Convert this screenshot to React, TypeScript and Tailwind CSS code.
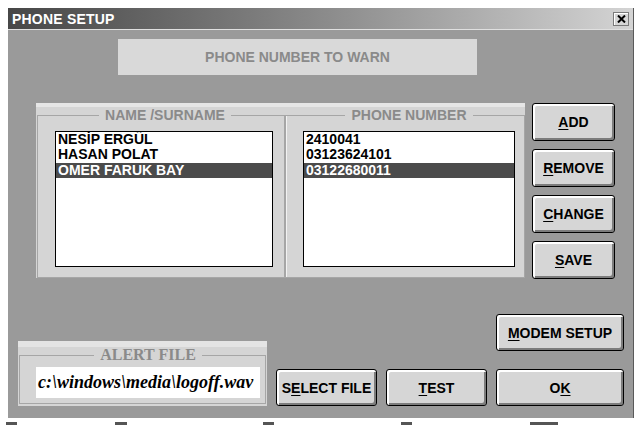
import React from "react";

const sans = { fontFamily: '"Liberation Sans", Arial, sans-serif' };
const serif = { fontFamily: '"Liberation Serif", "Times New Roman", serif' };

function Btn({ className, children }: { className: string; children: React.ReactNode }) {
  return (
    <div
      className={`flex items-center justify-center h-[37px] border border-black rounded-[3px] bg-[#d6d6d6] shadow-[inset_2px_2px_0_#ffffff,inset_-2px_-2px_0_#7c7c7c] text-[14px] font-bold text-black leading-none ${className}`}
    >
      {children}
    </div>
  );
}

function U({ children }: { children: React.ReactNode }) {
  return <span className="underline underline-offset-[2px] decoration-[1px]">{children}</span>;
}

function ListBox({ className, items, selected }: { className: string; items: string[]; selected: number }) {
  return (
    <div className={`bg-white border border-black h-[136px] ${className}`}>
      {items.map((t, i) => (
        <div
          key={t}
          className={`h-[15px] leading-[15px] text-[14px] font-bold pl-[2px] whitespace-nowrap ${
            i === selected ? "mt-[1px] bg-[#4b4b4b] text-white" : "text-black"
          }`}
        >
          {t}
        </div>
      ))}
    </div>
  );
}

export default function App() {
  return (
    <div className="w-[638px] h-[431px] bg-white overflow-hidden" style={sans}>
      <div className="pt-[8px] pl-[8px]">
        <div className="w-[626px] flex flex-col border-r border-[#5a5a5a]">
          {/* title bar */}
          <div className="h-[22px] flex items-center justify-between pl-[4px] pr-[4px] bg-gradient-to-r from-[#474747] via-[#8a8a8a] to-[#d4d4d4] border-b border-[#e0e0e0]">
            <span className="text-white text-[14px] font-bold leading-none tracking-[0.2px]">PHONE SETUP</span>
            <div className="w-[16px] h-[14px] bg-[#d6d6d6] border border-[#7a7a7a] shadow-[inset_1px_1px_0_#ffffff] flex items-center justify-center">
              <svg width="9" height="8" viewBox="0 0 9 8">
                <path d="M1 0.5 L8 7.5 M8 0.5 L1 7.5" stroke="#000" strokeWidth="2" />
              </svg>
            </div>
          </div>
          {/* body */}
          <div className="h-[388px] bg-[#9a9a9a] flex flex-col">
            <div className="ml-[110px] mt-[9px] w-[359px] h-[36px] bg-[#d9d9d9] flex items-center justify-center text-[14px] font-bold text-[#8a8a8a]">
              PHONE NUMBER TO WARN
            </div>

            <div className="flex ml-[28px] mt-[28px]">
              <div className="w-[489px] h-[175px] flex bg-[#d5d5d5] border-t-[4px] border-[#e6e6e6]">
                <fieldset className="w-[248px] h-[171px] border border-[#a6a6a6] shadow-[1px_0_0_#f2f2f2] pl-[17px] pr-[9px] ml-[1px]">
                  <legend className="mx-auto px-[6px] text-[14px] leading-[16px] font-bold text-[#8a8a8a]">NAME /SURNAME</legend>
                  <ListBox className="w-[218px] mt-[8px]" items={["NESİP ERGÜL", "HASAN POLAT", "OMER FARUK BAY"]} selected={2} />
                </fieldset>
                <fieldset className="w-[240px] h-[171px] border border-[#a6a6a6] shadow-[inset_1px_0_0_#f2f2f2] pl-[17px] pr-[9px]">
                  <legend className="mx-auto px-[6px] text-[14px] leading-[16px] font-bold text-[#8a8a8a]">PHONE NUMBER</legend>
                  <ListBox className="w-[212px] mt-[8px]" items={["2410041", "03123624101", "03122680011"]} selected={2} />
                </fieldset>
              </div>
              <div className="ml-[7px] flex flex-col gap-[8px]">
                <Btn className="w-[83px] h-[38px]"><U>A</U>DD</Btn>
                <Btn className="w-[83px] h-[38px]"><U>R</U>EMOVE</Btn>
                <Btn className="w-[83px] h-[38px]"><U>C</U>HANGE</Btn>
                <Btn className="w-[83px] h-[38px]"><U>S</U>AVE</Btn>
              </div>
            </div>

            <div className="flex items-end ml-[10px] mt-[35px]">
              <div className="w-[249px] h-[65px] bg-[#d5d5d5] border-t-[6px] border-[#e4e4e4] flex">
                <fieldset className="w-[247px] h-[57px] ml-[1px] border border-[#a6a6a6] pl-[16px] pr-[5px]" style={serif}>
                  <legend className="mx-auto px-[6px] text-[16px] leading-[16px] font-bold text-[#8a8a8a]">ALERT FILE</legend>
                  <div className="mt-[4px] h-[31px] w-[224px] bg-white flex items-center pl-[2px] text-[18px] font-bold italic text-black whitespace-nowrap overflow-hidden">
                    c:\windows\media\logoff.wav
                  </div>
                </fieldset>
              </div>
              <div className="ml-[9px] w-[348px] flex flex-col items-end">
                <Btn className="w-[128px]"><U>M</U>ODEM SETUP</Btn>
                <div className="flex gap-[9px] mt-[18px]">
                  <Btn className="w-[101px]">S<U>E</U>LECT FILE</Btn>
                  <Btn className="w-[101px]"><U>T</U>EST</Btn>
                  <Btn className="w-[128px]">O<U>K</U></Btn>
                </div>
              </div>
            </div>
          </div>
        </div>
      </div>
      <div className="flex mt-[4px] h-[3px]">
        <div className="ml-[6px] w-[11px] bg-[#555]" />
        <div className="ml-[98px] w-[12px] bg-[#555]" />
        <div className="ml-[136px] w-[11px] bg-[#555]" />
        <div className="ml-[127px] w-[11px] bg-[#555]" />
        <div className="ml-[118px] w-[28px] bg-[#555]" />
      </div>
    </div>
  );
}
